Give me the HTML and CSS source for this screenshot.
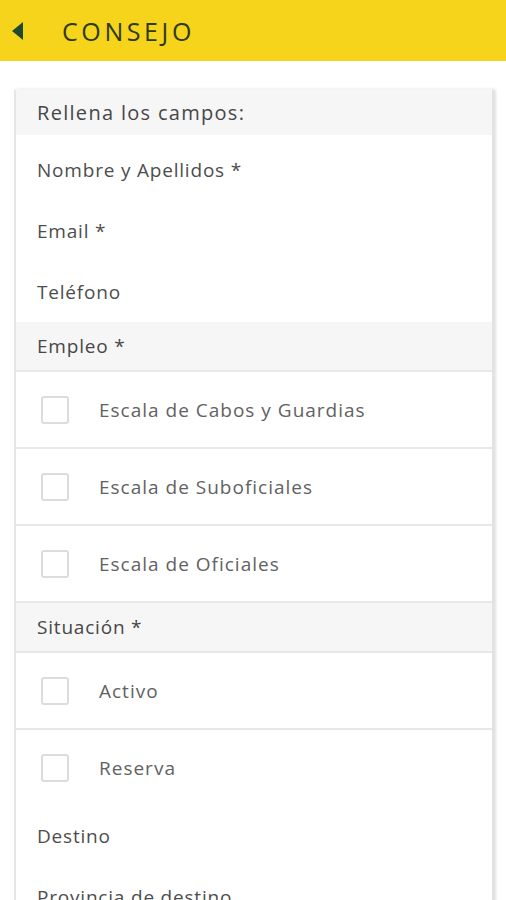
FILE: index.html
```html
<!DOCTYPE html>
<html lang="es">
<head>
<meta charset="utf-8">
<title>Consejo</title>
<link rel="stylesheet" href="styles.css">
</head>
<body>
<header class="topbar">
  <svg class="back" width="12" height="18" viewBox="0 0 12 18"><polygon points="11,0 11,18 0,9" fill="#1e4a2a"/></svg>
  <h1 class="title">CONSEJO</h1>
</header>
<main class="card">
  <div class="band first">Rellena los campos:</div>
  <div class="inputs">
    <div class="field">Nombre y Apellidos *</div>
    <div class="field">Email *</div>
    <div class="field">Teléfono</div>
  </div>
  <div class="band">Empleo *</div>
  <div class="check"><span class="box"></span><span class="lbl">Escala de Cabos y Guardias</span></div>
  <div class="check"><span class="box"></span><span class="lbl">Escala de Suboficiales</span></div>
  <div class="check"><span class="box"></span><span class="lbl">Escala de Oficiales</span></div>
  <div class="band">Situación *</div>
  <div class="check"><span class="box"></span><span class="lbl">Activo</span></div>
  <div class="check last"><span class="box"></span><span class="lbl">Reserva</span></div>
  <div class="field">Destino</div>
  <div class="field">Provincia de destino</div>
</main>
</body>
</html>
```
FILE: styles.css
```css
html, body {
  margin: 0;
  padding: 0;
  background: #ffffff;
  font-family: "Open Sans", "DejaVu Sans", sans-serif;
  overflow: hidden;
}
.topbar {
  height: 61px;
  background: #f5d41b;
  display: flex;
  align-items: center;
  padding-left: 12px;
}
.back {
  display: block;
}
.title {
  margin: 0 0 0 38px;
  font-size: 25px;
  font-weight: 400;
  letter-spacing: 3.6px;
  color: #2e3b15;
}
.card {
  margin: 28px 12px 0 14px;
  border-left: 2px solid #e6e6e6;
  border-right: 2px solid #e2e2e2;
  border-radius: 3px 3px 0 0;
  box-shadow: 2px 0 3px rgba(0,0,0,0.12);
  background: #fff;
}
.band {
  background: #f6f6f6;
  height: 48px;
  display: flex;
  align-items: center;
  padding-left: 21px;
  font-size: 19px;
  letter-spacing: 0.8px;
  color: #474747;
  border-bottom: 2px solid #e8e8e8;
}
.band.first {
  height: 46px;
  border-bottom: none;
  font-size: 20px;
  letter-spacing: 1.3px;
}
.inputs {
  padding-top: 4px;
}
.field {
  height: 61px;
  display: flex;
  align-items: center;
  padding-left: 21px;
  font-size: 19px;
  letter-spacing: 0.8px;
  color: #4d4d4d;
}
.check {
  height: 75px;
  display: flex;
  align-items: center;
  padding-left: 25px;
  border-bottom: 2px solid #e8e8e8;
}
.check.last {
  border-bottom: none;
}
.box {
  width: 24px;
  height: 24px;
  border: 2px solid #dcdcdc;
  border-radius: 3px;
  flex: none;
}
.lbl {
  margin-left: 30px;
  font-size: 19px;
  letter-spacing: 1px;
  color: #626262;
}
```
